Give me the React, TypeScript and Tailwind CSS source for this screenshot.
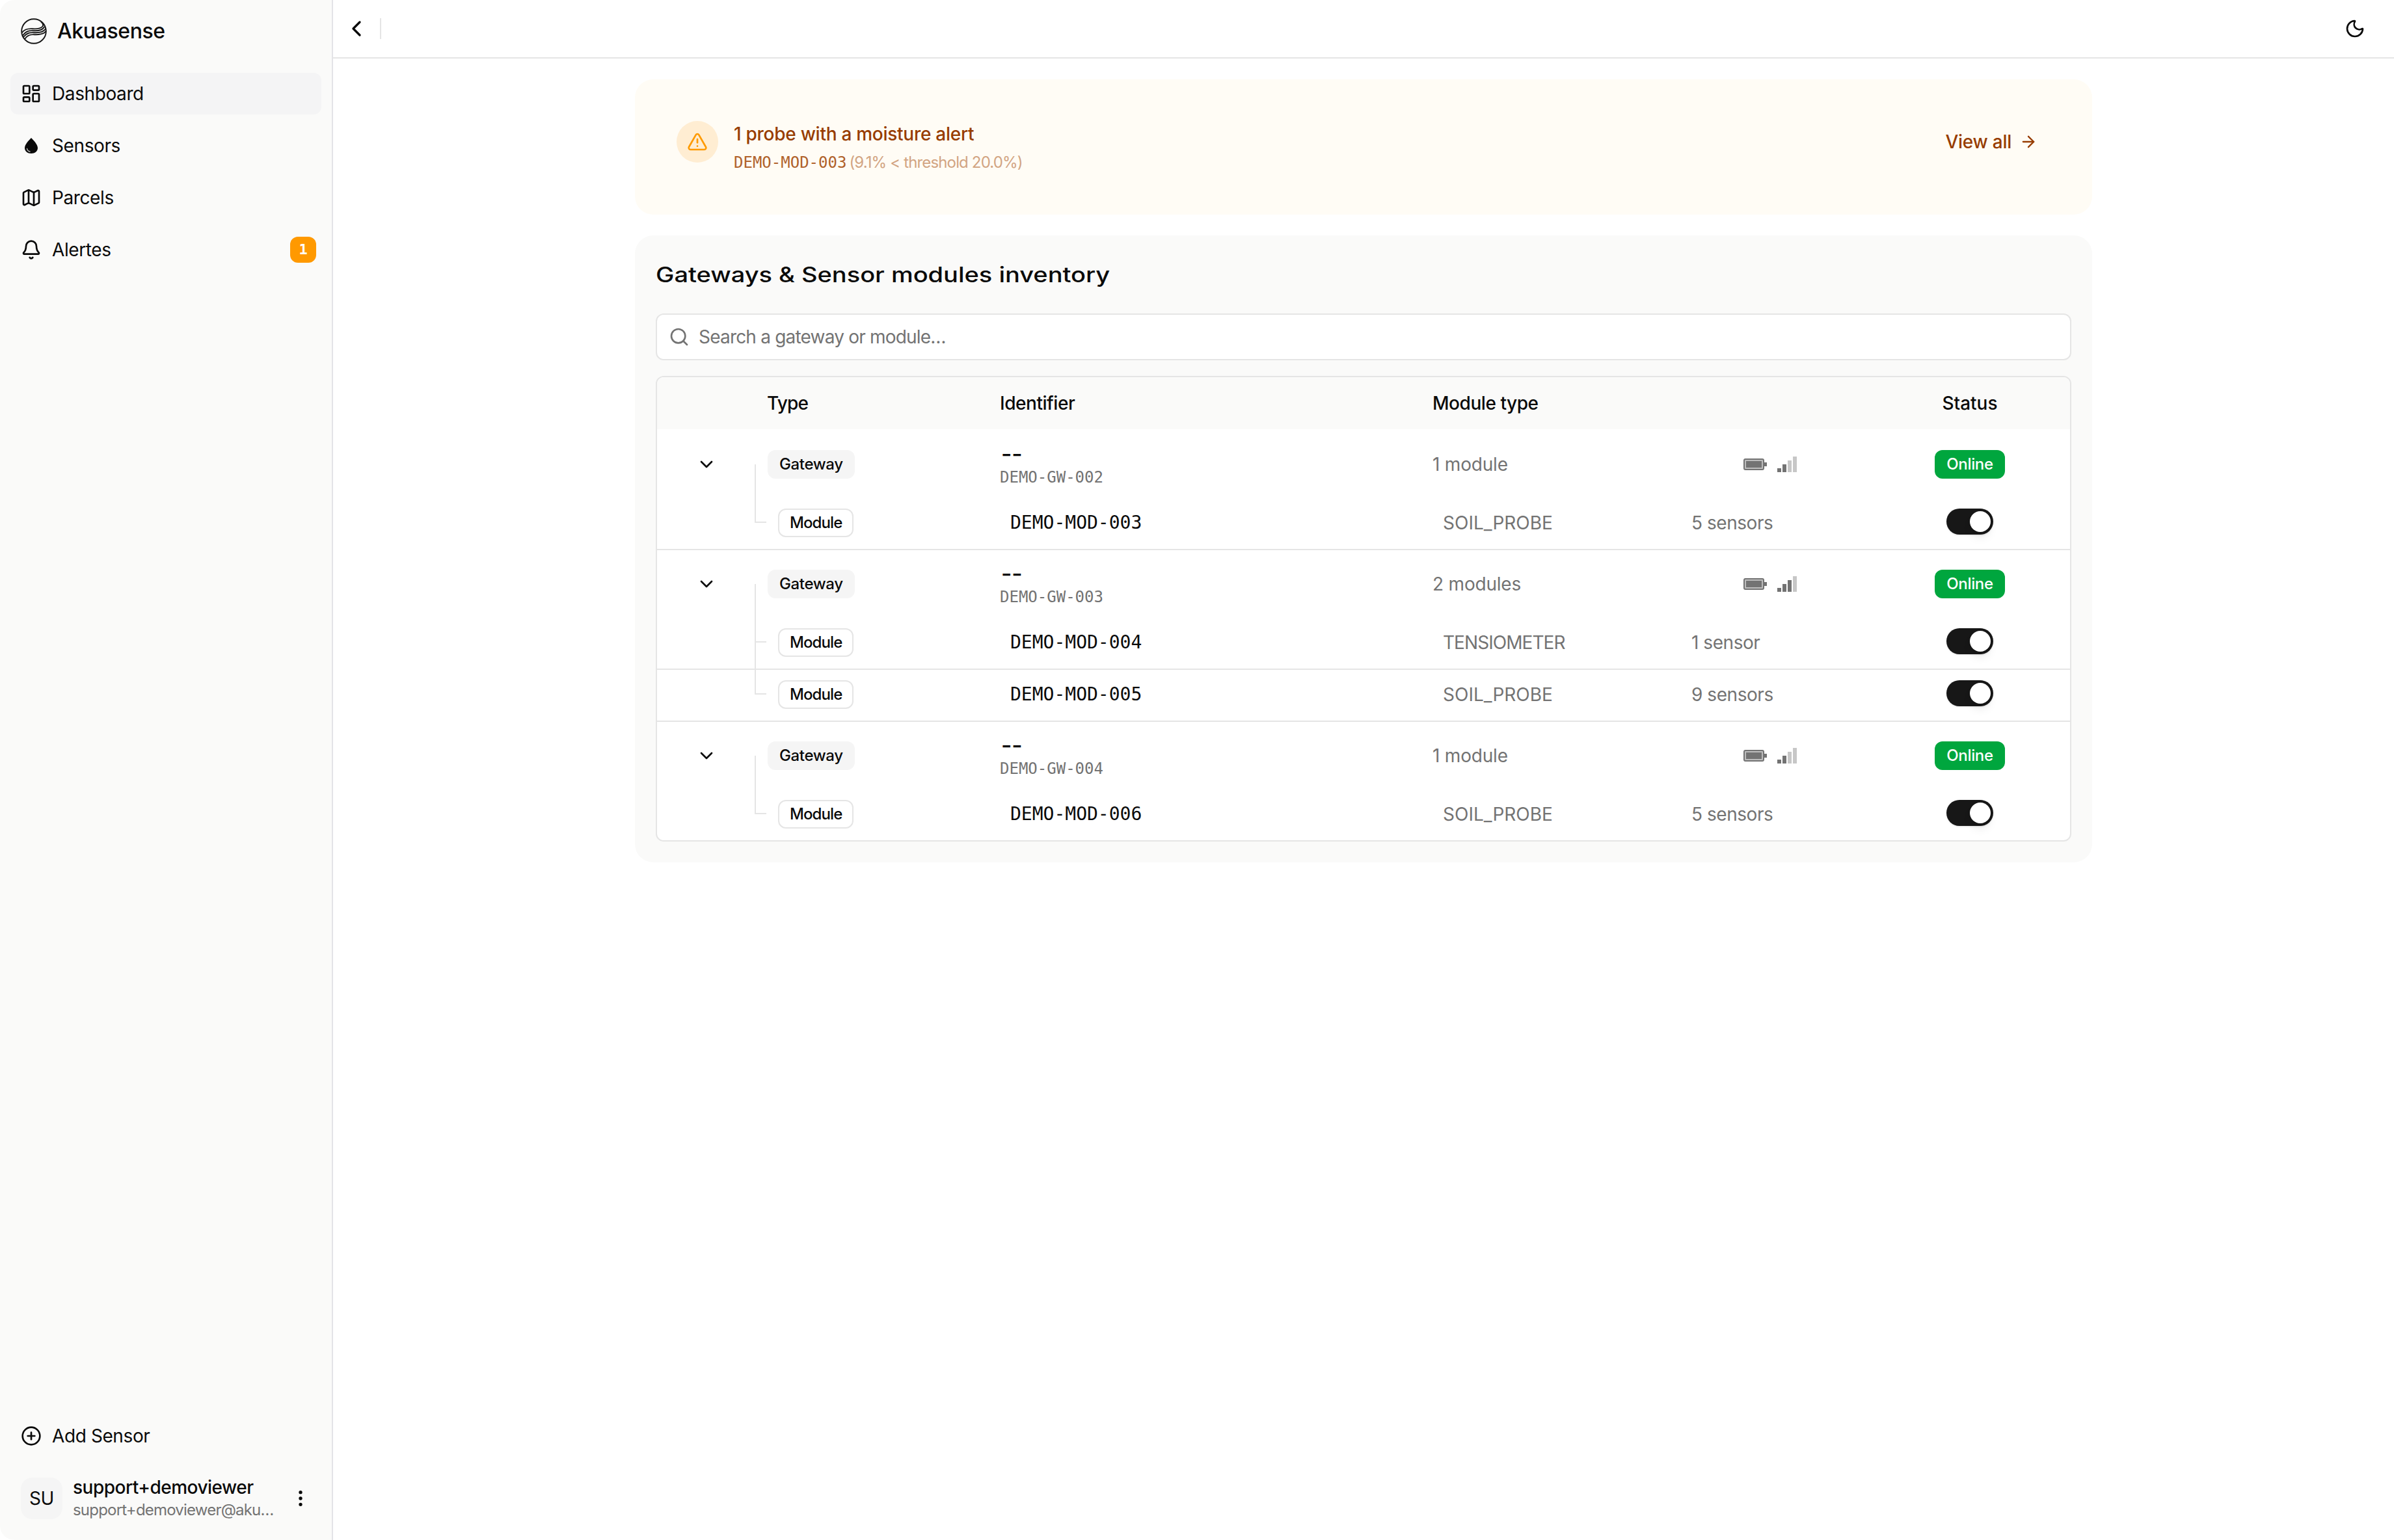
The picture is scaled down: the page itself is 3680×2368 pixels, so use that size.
import type { ReactNode } from "react";
import {
  ArrowRight,
  Bell,
  ChevronDown,
  ChevronLeft,
  CirclePlus,
  EllipsisVertical,
  LayoutDashboard,
  Map as MapIcon,
  Moon,
  Search,
  TriangleAlert,
} from "lucide-react";

type Module = { id: string; type: string; sensors: string };
type Gateway = { id: string; count: string; signal: number; modules: Module[] };

const gateways: Gateway[] = [
  {
    id: "DEMO-GW-002",
    count: "1 module",
    signal: 2,
    modules: [{ id: "DEMO-MOD-003", type: "SOIL_PROBE", sensors: "5 sensors" }],
  },
  {
    id: "DEMO-GW-003",
    count: "2 modules",
    signal: 3,
    modules: [
      { id: "DEMO-MOD-004", type: "TENSIOMETER", sensors: "1 sensor" },
      { id: "DEMO-MOD-005", type: "SOIL_PROBE", sensors: "9 sensors" },
    ],
  },
  {
    id: "DEMO-GW-004",
    count: "1 module",
    signal: 2,
    modules: [{ id: "DEMO-MOD-006", type: "SOIL_PROBE", sensors: "5 sensors" }],
  },
];

const columns = "grid grid-cols-[154px_357px_665px_382px_306px_308px]";
const mono = "font-['DejaVu_Sans_Mono',monospace]";

function Logo() {
  return (
    <svg className="size-10 shrink-0" viewBox="0 0 40 40" fill="none" stroke="#171717" strokeWidth="1.9" strokeLinecap="round">
      <circle cx="20" cy="20" r="18.8" />
      <path d="M2 22C6 16.5 12 15.8 18 16.2S31 16 33.5 12.5C35 10 34 8 31.5 6" />
      <path d="M3 26.5C8 19.5 13 18.8 19 19.2S33 19 36 13.5" />
      <path d="M4 29C9 22.5 14 21.8 20 22.2S34.5 21.5 38 16.5" />
      <path d="M6 32C10 25.5 15 24.8 21 25.2S35.5 24.5 38.5 20" />
    </svg>
  );
}

function Droplet() {
  return (
    <svg className="size-8 shrink-0" viewBox="0 0 32 32" fill="none">
      <path d="M16 4C19.5 7.8 26 14 26 19.5C26 24.7 21.5 28 16 28S6 24.7 6 19.5C6 14 12.5 7.8 16 4Z" fill="#0a0a0a" />
      <path d="M9.5 20.5C10 23 11.5 24.5 14 25" stroke="#b5b5b5" strokeWidth="1.4" strokeLinecap="round" />
    </svg>
  );
}

function NavItem({ icon, label, active, badge }: { icon: ReactNode; label: string; active?: boolean; badge?: string }) {
  return (
    <a className={`flex h-16 items-center gap-4 rounded-xl pl-4 pr-2 text-[28px] leading-10 ${active ? "bg-[#f4f4f5]" : ""}`}>
      {icon}
      <span className="flex-1 tracking-[-0.4px]">{label}</span>
      {badge && (
        <span className={`flex size-10 items-center justify-center rounded-xl bg-[#ff9900] text-[22px] font-bold text-white ${mono}`}>
          {badge}
        </span>
      )}
    </a>
  );
}

function Sidebar() {
  return (
    <aside className="flex w-[512px] shrink-0 flex-col rounded-l-[22px] border-r-2 border-[#e4e4e7] bg-[#fafaf9] px-4">
      <div className="flex items-center gap-4 pl-4 pt-7">
        <Logo />
        <span className="text-[32px] font-medium leading-10 tracking-[-0.4px]">Akuasense</span>
      </div>
      <nav className="mt-11 flex flex-col gap-4">
        <NavItem icon={<LayoutDashboard className="size-8" />} label="Dashboard" active />
        <NavItem icon={<Droplet />} label="Sensors" />
        <NavItem icon={<MapIcon className="size-8" />} label="Parcels" />
        <NavItem icon={<Bell className="size-8" />} label="Alertes" badge="1" />
      </nav>
      <div className="mt-auto pb-8">
        <NavItem icon={<CirclePlus className="size-8" />} label="Add Sensor" />
        <div className="mt-8 flex h-16 items-center pl-4 pr-4">
          <div className="flex size-16 items-center justify-center rounded-[18px] bg-[#f5f5f5] text-[28px] tracking-[-0.4px]">SU</div>
          <div className="ml-4 w-[310px]">
            <div className="text-[28px] font-medium leading-9 tracking-[-0.5px]">support+demoviewer</div>
            <div className="text-2xl leading-[34px] tracking-[-0.8px] text-[#737373]">support+demoviewer@aku…</div>
          </div>
          <EllipsisVertical className="ml-6 size-8 shrink-0" />
        </div>
      </div>
    </aside>
  );
}

function Header() {
  return (
    <header className="flex h-[90px] items-center border-b-2 border-[#e5e5e5] pl-4 pr-11">
      <ChevronLeft className="size-10" />
      <div className="ml-4 h-8 w-0.5 bg-[#e5e5e5]" />
      <Moon className="ml-auto size-8" />
    </header>
  );
}

function AlertCard() {
  return (
    <section className="flex h-52 items-start rounded-[28px] bg-[#fffcf5] px-16 pt-16 text-[#973c00]">
      <div className="flex size-16 items-center justify-center rounded-full bg-[#ffedd2]">
        <TriangleAlert className="size-8 text-[#fe9a00]" />
      </div>
      <div className="ml-6 flex-1">
        <p className="text-[28px] font-medium leading-10 tracking-[-0.27px]">1 probe with a moisture alert</p>
        <p className="mt-2 flex text-2xl leading-8">
          <span className={`${mono} text-[#b0622b]`}>DEMO-MOD-003</span>
          <span className="ml-1 tracking-[-0.85px] text-[#d2a482]">(9.1% &lt; threshold 20.0%)</span>
        </p>
      </div>
      <button className="flex h-16 items-center gap-3 pr-5 text-[28px] font-medium tracking-[-0.25px]">
        View all
        <ArrowRight className="size-7" />
      </button>
    </section>
  );
}

function Battery() {
  return (
    <div className="flex items-center">
      <div className="h-[18px] w-8 rounded-[3px] border-2 border-[#737373] bg-[#bdbdbd] p-0.5">
        <div className="h-full w-full bg-[#737373]" />
      </div>
      <div className="h-1.5 w-1 bg-[#737373]" />
    </div>
  );
}

function Signal({ level }: { level: number }) {
  const heights = ["h-1.5", "h-3", "h-[18px]", "h-6"];
  return (
    <div className="flex items-end gap-0.5">
      {heights.map((h, i) => (
        <div key={h} className={`w-1.5 ${h} ${i < level ? "bg-[#737373]" : "bg-[#c7c7c7]"}`} />
      ))}
    </div>
  );
}

function Toggle() {
  return (
    <div className="flex h-10 w-[72px] items-center justify-end rounded-full bg-[#171717] p-1 shadow-sm">
      <div className="size-8 rounded-full bg-white shadow-lg" />
    </div>
  );
}

function GatewayRow({ gateway, first }: { gateway: Gateway; first: boolean }) {
  return (
    <div className={`${columns} items-center ${first ? "h-[106px] pt-0.5" : "h-[104px]"}`}>
      <div className="flex justify-center pr-0.5">
        <ChevronDown className="size-8" />
      </div>
      <div className="relative flex h-full items-center pl-4">
        {/* trunk of the tree, starts at the middle of the row */}
        <span className="absolute -left-1 bottom-0 top-1/2 w-0.5 bg-[#e5e5e5]" />
        <span className="flex h-11 items-center rounded-xl bg-[#f5f5f5] px-[18px] text-2xl font-medium tracking-[-0.35px]">
          Gateway
        </span>
      </div>
      <div className="pl-4">
        <div className="ml-0.5 w-fit origin-left scale-x-125 text-[28px] font-bold leading-10">--</div>
        <div className={`text-2xl leading-8 text-[#737373] ${mono}`}>{gateway.id}</div>
      </div>
      <div className="pl-4 text-[28px] leading-10 tracking-[-0.2px] text-[#737373]">{gateway.count}</div>
      <div className="flex items-center justify-center gap-4">
        <Battery />
        <Signal level={gateway.signal} />
      </div>
      <div className="flex justify-center">
        <span className="flex h-11 items-center rounded-xl bg-[#00a63e] px-[18px] text-2xl font-medium tracking-[-0.35px] text-white">
          Online
        </span>
      </div>
    </div>
  );
}

function ModuleRow({ module, last, end }: { module: Module; last: boolean; end: boolean }) {
  return (
    <div className={`${columns} pt-4 text-[28px] leading-[44px] ${end ? "h-[78px]" : "h-20 border-b-2 border-[#e5e5e5]"}`}>
      <div />
      <div className="relative pl-8">
        <span className={`absolute -left-1 -top-4 w-0.5 bg-[#e5e5e5] ${last ? "h-[38px]" : "h-20"}`} />
        <span className="absolute -left-1 top-5 h-0.5 w-[18px] bg-[#e5e5e5]" />
        <span className="inline-flex h-11 items-center rounded-xl border-2 border-[#e5e5e5] px-4 align-top text-2xl font-medium tracking-[-0.9px]">
          Module
        </span>
      </div>
      <div className={`pl-8 ${mono}`}>{module.id}</div>
      <div className={`pl-8 text-[#737373] ${module.type === "TENSIOMETER" ? "tracking-[-0.95px]" : ""}`}>{module.type}</div>
      <div className="pl-8 tracking-[-0.45px] text-[#737373]">{module.sensors}</div>
      <div className="flex justify-center">
        <Toggle />
      </div>
    </div>
  );
}

function Inventory() {
  return (
    <section className="mt-8 rounded-[28px] bg-[#fafaf9] p-8">
      <h2 className="mt-[9px] origin-left scale-x-[1.187] whitespace-nowrap text-[32px] font-medium leading-[40px]">
        Gateways &amp; Sensor modules inventory
      </h2>
      <div className="mt-[39px] flex h-[72px] items-center gap-3.5 rounded-xl border-2 border-[#e5e5e5] bg-white pl-[18px] text-[28px] text-[#737373]">
        <Search className="size-8" />
        <span className="tracking-[-0.8px]">Search a gateway or module…</span>
      </div>
      <div className="mt-6 overflow-hidden rounded-xl border-2 border-[#e5e5e5] bg-white">
        <div className={`${columns} h-20 items-center bg-[#fafaf9] text-[28px] font-medium tracking-[-0.45px]`}>
          <div />
          <div className="pl-[15px] tracking-[-0.8px]">Type</div>
          <div className="pl-4">Identifier</div>
          <div className="pl-4">Module type</div>
          <div />
          <div className="text-center tracking-normal">Status</div>
        </div>
        {gateways.map((gateway, i) => (
          <div key={gateway.id}>
            <GatewayRow gateway={gateway} first={i === 0} />
            {gateway.modules.map((module, j) => (
              <ModuleRow
                key={module.id}
                module={module}
                last={j === gateway.modules.length - 1}
                end={i === gateways.length - 1 && j === gateway.modules.length - 1}
              />
            ))}
          </div>
        ))}
      </div>
    </section>
  );
}

export default function App() {
  return (
    <div className="flex h-[2368px] w-[3680px] bg-white font-['Inter',sans-serif] text-[#0a0a0a]">
      <Sidebar />
      <div className="flex-1">
        <Header />
        <main className="mx-auto w-[2240px] pt-8">
          <AlertCard />
          <Inventory />
        </main>
      </div>
    </div>
  );
}
